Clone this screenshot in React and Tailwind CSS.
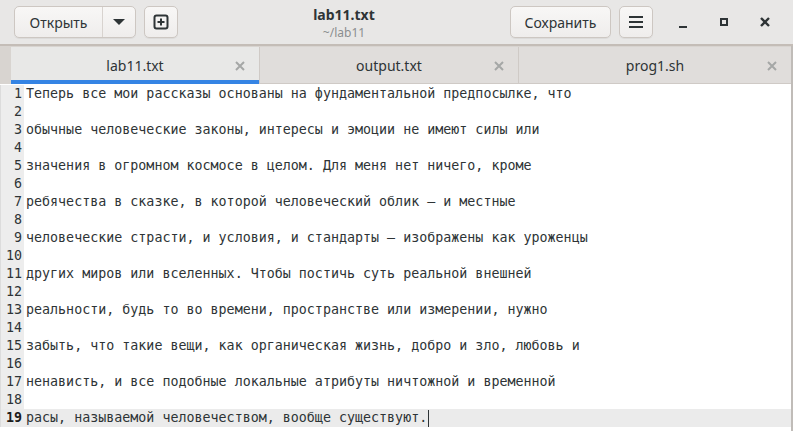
import React from 'react'

const LINES = [
  'Теперь все мои рассказы основаны на фундаментальной предпосылке, что',
  '',
  'обычные человеческие законы, интересы и эмоции не имеют силы или',
  '',
  'значения в огромном космосе в целом. Для меня нет ничего, кроме',
  '',
  'ребячества в сказке, в которой человеческий облик — и местные',
  '',
  'человеческие страсти, и условия, и стандарты — изображены как уроженцы',
  '',
  'других миров или вселенных. Чтобы постичь суть реальной внешней',
  '',
  'реальности, будь то во времени, пространстве или измерении, нужно',
  '',
  'забыть, что такие вещи, как органическая жизнь, добро и зло, любовь и',
  '',
  'ненависть, и все подобные локальные атрибуты ничтожной и временной',
  '',
  'расы, называемой человечеством, вообще существуют.',
]

const TABS = [
  { name: 'lab11.txt', active: true, w: 'w-[248px]' },
  { name: 'output.txt', active: false, w: 'w-[259px]' },
  { name: 'prog1.sh', active: false, w: 'flex-1' },
]

const btn =
  'h-8 rounded-[5px] border border-[#cdc7c2] bg-gradient-to-b from-[#f8f7f6] to-[#efedec] shadow-[0_1px_0_rgba(0,0,0,0.05)] text-[#2e3436] text-[14px] flex items-center justify-center'

function Header() {
  return (
    <div className="h-[46px] bg-[#e8e7e6] border-b-2 border-[#c4bdb7] flex items-center px-[14px] relative">
      <div className={`${btn} w-[122px] p-0`}>
        <span className="w-[88px] text-center border-r border-[#d8d3cf] h-full flex items-center justify-center">Открыть</span>
        <span className="flex-1 flex items-center justify-center">
          <svg width="12" height="7" viewBox="0 0 12 7"><path d="M0 0h12L6 6z" fill="#2e3436" /></svg>
        </span>
      </div>
      <div className={`${btn} w-[34px] ml-2`}>
        <svg width="16" height="16" viewBox="0 0 16 16">
          <rect x="1.5" y="1.5" width="13" height="13" rx="2" fill="none" stroke="#2e3436" strokeWidth="2" />
          <path d="M8 4.5v7M4.5 8h7" stroke="#2e3436" strokeWidth="2" />
        </svg>
      </div>
      <div className="flex-1 flex flex-col items-center justify-center leading-none">
        <div className="text-[14px] font-bold text-[#2e3436] mt-[2px]">lab11.txt</div>
        <div className="text-[12px] text-[#8b8e8f] mt-[5px]">~/lab11</div>
      </div>
      <div className={`${btn} w-[101px]`}>Сохранить</div>
      <div className={`${btn} w-[34px] ml-2`}>
        <svg width="16" height="14" viewBox="0 0 16 14">
          <path d="M1 2h14M1 7h14M1 12h14" stroke="#2e3436" strokeWidth="2" />
        </svg>
      </div>
      <div className="flex items-center ml-[24px] mr-[8px] gap-[29px] text-[#2e3436]">
        <div className="w-[12px] h-[12px] flex items-end justify-center">
          <div className="w-[8px] h-[2.5px] bg-[#2e3436]" />
        </div>
        <div className="w-[12px] h-[12px] flex items-center justify-center">
          <div className="w-[8px] h-[8px] border-[2px] border-[#2e3436]" />
        </div>
        <svg width="12" height="12" viewBox="0 0 12 12">
          <path d="M2 2l8 8M10 2l-8 8" stroke="#2e3436" strokeWidth="2.4" />
        </svg>
      </div>
    </div>
  )
}

function Tabs() {
  return (
    <div className="h-[38px] bg-[#d8d4d0] flex pl-[11px] border-r-2 border-[#c0bcb8]">
      {TABS.map((t) => (
        <div
          key={t.name}
          className={`${t.w} ${t.active ? 'bg-[#e8e8e7]' : 'bg-[#e0dddb] border-l border-[#cfcac6]'} relative flex items-center border-b border-[#cdc8c4] mt-[1px]`}
        >
          <span className="flex-1 text-center text-[14px] text-[#2e3436] pt-[1px]">{t.name}</span>
          <svg className="absolute right-[14px] top-[14px]" width="10" height="10" viewBox="0 0 10 10">
            <path d="M1 1l8 8M9 1l-8 8" stroke="#a5a7a6" strokeWidth="2" />
          </svg>
          {t.active && <div className="absolute left-0 right-0 bottom-[-1px] h-[4px] bg-[#3584e4]" />}
        </div>
      ))}
    </div>
  )
}

function Editor() {
  return (
    <div className="flex-1 bg-white border-r-2 border-[#c0bcb8] pt-[1px] font-['DejaVu_Sans_Mono',monospace] text-[13.33px] text-[#2e3436]">
      {LINES.map((l, i) => {
        const cur = i === LINES.length - 1
        return (
          <div key={i} className={`flex h-[18px] items-center ${cur ? 'bg-[#ebebeb]' : ''}`}>
            <div className={`w-[24px] shrink-0 h-full text-right pr-[2px] flex items-center justify-end border-l border-[#dcdcdc] ${cur ? 'bg-[#ebebeb] font-bold text-[#1c1c1c]' : 'bg-[#ededed] text-[#2e3436]'}`}>
              {i + 1}
            </div>
            <div className="pl-[2px] whitespace-pre flex items-center">
              {l}
              {cur && <span className="inline-block w-[1px] h-[17px] bg-[#2e3436] ml-[1px]" />}
            </div>
          </div>
        )
      })}
    </div>
  )
}

export default function App() {
  return (
    <div className="w-[793px] h-[431px] overflow-hidden flex flex-col font-['Noto_Sans',sans-serif] bg-white">
      <Header />
      <Tabs />
      <Editor />
    </div>
  )
}
